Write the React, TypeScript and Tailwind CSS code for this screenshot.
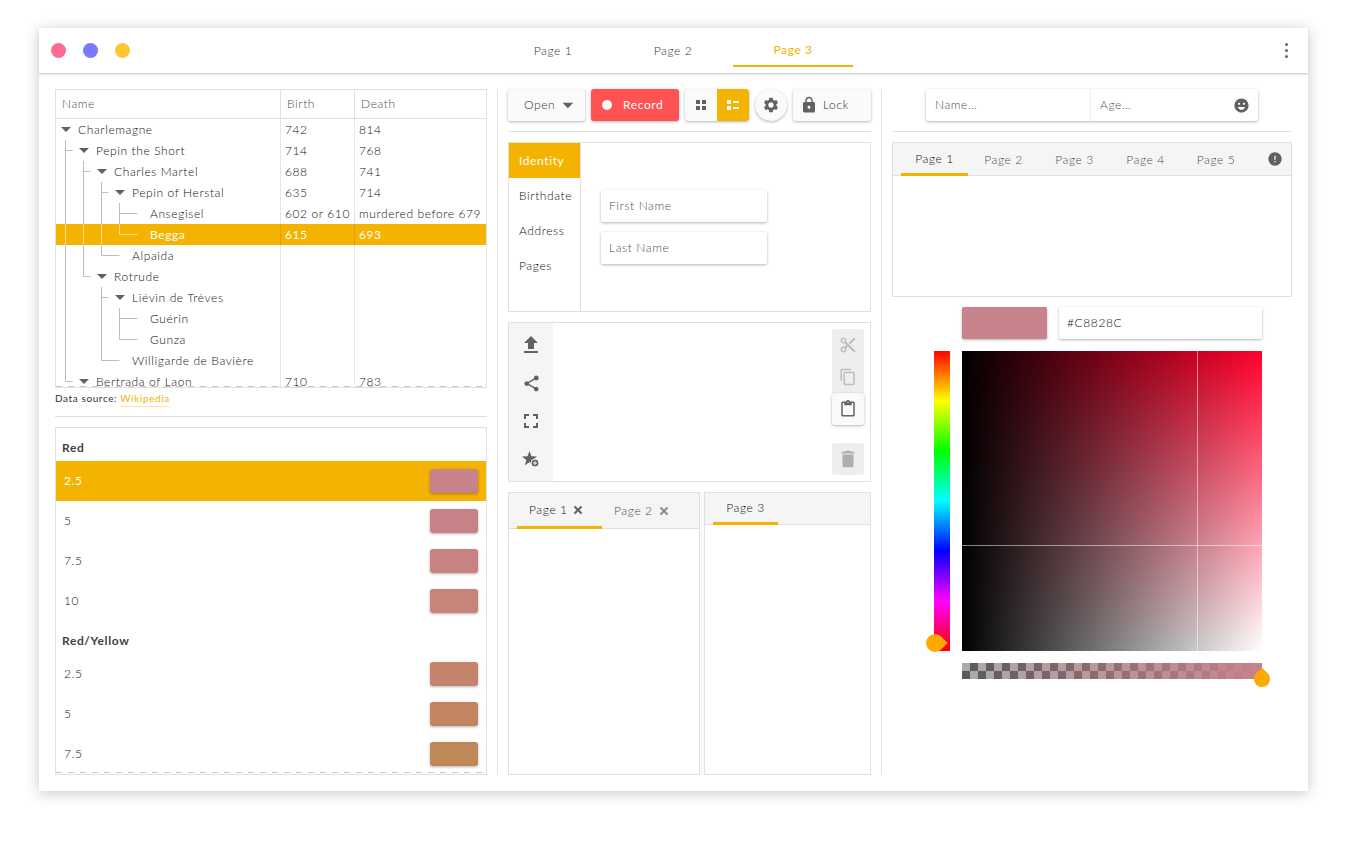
import React from 'react'
import {
  MdArrowDropDown,
  MdContentCopy,
  MdContentCut,
  MdContentPaste,
  MdDelete,
  MdEmojiEmotions,
  MdError,
  MdFileUpload,
  MdFullscreen,
  MdLock,
  MdSettings,
  MdShare,
} from 'react-icons/md'

type TreeRowData = {
  name: string
  birth?: string
  death?: string
  depth: number
  // guide columns that run the full row height
  pass: number[]
  kind: 'tee' | 'elbow' | 'none'
  branch: boolean
  selected?: boolean
}

const treeRows: TreeRowData[] = [
  { name: 'Charlemagne', birth: '742', death: '814', depth: 0, pass: [], kind: 'none', branch: true },
  { name: 'Pepin the Short', birth: '714', death: '768', depth: 1, pass: [], kind: 'tee', branch: true },
  { name: 'Charles Martel', birth: '688', death: '741', depth: 2, pass: [0], kind: 'tee', branch: true },
  { name: 'Pepin of Herstal', birth: '635', death: '714', depth: 3, pass: [0, 1], kind: 'tee', branch: true },
  { name: 'Ansegisel', birth: '602 or 610', death: 'murdered before 679', depth: 4, pass: [0, 1, 2], kind: 'tee', branch: false },
  { name: 'Begga', birth: '615', death: '693', depth: 4, pass: [0, 1, 2], kind: 'elbow', branch: false, selected: true },
  { name: 'Alpaida', depth: 3, pass: [0, 1], kind: 'elbow', branch: false },
  { name: 'Rotrude', depth: 2, pass: [0], kind: 'elbow', branch: true },
  { name: 'Liévin de Trèves', depth: 3, pass: [0], kind: 'tee', branch: true },
  { name: 'Guérin', depth: 4, pass: [0, 2], kind: 'tee', branch: false },
  { name: 'Gunza', depth: 4, pass: [0, 2], kind: 'elbow', branch: false },
  { name: 'Willigarde de Bavière', depth: 3, pass: [0], kind: 'elbow', branch: false },
  { name: 'Bertrada of Laon', birth: '710', death: '783', depth: 1, pass: [], kind: 'elbow', branch: true },
]

const colorGroups = [
  {
    title: 'Red',
    items: [
      { label: '2.5', color: 'bg-[#c8828c]', selected: true },
      { label: '5', color: 'bg-[#c88186]' },
      { label: '7.5', color: 'bg-[#c88281]' },
      { label: '10', color: 'bg-[#c7847a]' },
    ],
  },
  {
    title: 'Red/Yellow',
    items: [
      { label: '2.5', color: 'bg-[#c5836c]' },
      { label: '5', color: 'bg-[#c28562]' },
      { label: '7.5', color: 'bg-[#bf8859]' },
    ],
  },
]

const raised = 'shadow-[0_1px_3px_rgba(0,0,0,0.3)]'
const dashes =
  'bg-[repeating-linear-gradient(to_right,#c8c8c8_0,#c8c8c8_6px,transparent_6px,transparent_12px)]'

function TreeGuide({ row }: { row: TreeRowData }) {
  const x = (i: number) => 9.5 + i * 18
  const line = row.selected ? 'rgba(255,255,255,0.55)' : '#bdbdbd'
  const last = row.depth - 1
  return (
    <svg width={22 + row.depth * 18} height={21} className="shrink-0">
      {row.pass.map(i => (
        <line key={i} x1={x(i)} x2={x(i)} y1={0} y2={21} stroke={line} />
      ))}
      {row.kind !== 'none' && (
        <>
          <line x1={x(last)} x2={x(last)} y1={0} y2={row.kind === 'tee' ? 21 : 10.5} stroke={line} />
          <line x1={x(last)} x2={x(last) + (row.branch ? 7 : 18)} y1={10.5} y2={10.5} stroke={line} />
        </>
      )}
      {row.branch && (
        <polygon points={`${5 + row.depth * 18},8 ${15 + row.depth * 18},8 ${10 + row.depth * 18},13`} fill="#616161" />
      )}
    </svg>
  )
}

function TreeTable() {
  return (
    <div className="relative h-[299px] shrink-0 overflow-hidden border border-[#e0e0e0]">
      <div className="flex h-[29px] items-center border-b border-[#e0e0e0] text-[#4f4f4f]">
        <div className="w-[224px] pl-[6px]">Name</div>
        <div className="flex h-full w-[74px] items-center border-l border-[#e0e0e0] pl-[6px]">Birth</div>
        <div className="flex h-full flex-1 items-center border-l border-[#e0e0e0] pl-[6px]">Death</div>
      </div>
      {treeRows.map(row => (
        <div
          key={row.name}
          className={`flex h-[21px] items-center ${row.selected ? 'bg-[#f4b300] font-normal text-white' : 'text-[#111111]'}`}
        >
          <div className="flex h-full w-[224px] items-center whitespace-nowrap">
            <TreeGuide row={row} />
            {row.name}
          </div>
          <div className="flex h-full w-[74px] items-center whitespace-nowrap border-l border-black/10 pl-[4px]">
            {row.birth}
          </div>
          <div className="flex h-full flex-1 items-center whitespace-nowrap border-l border-black/10 pl-[4px]">
            {row.death}
          </div>
        </div>
      ))}
      <div className={`absolute inset-x-0 bottom-0 h-[1px] ${dashes}`} />
    </div>
  )
}

function ColorList() {
  return (
    <div className="relative min-h-0 flex-1 overflow-hidden border border-[#e0e0e0]">
      {colorGroups.map(group => (
        <div key={group.title}>
          <div className="flex h-[33px] items-center pl-[6px] pt-[6px] font-bold text-[#424242]">{group.title}</div>
          {group.items.map(item => (
            <div
              key={item.label}
              className={`flex h-[40px] items-center justify-between px-[8px] ${
                item.selected ? 'bg-[#f4b300] font-normal text-white' : 'text-[#111111]'
              }`}
            >
              {item.label}
              <div className={`h-[24px] w-[48px] rounded-[3px] ${item.color} ${raised}`} />
            </div>
          ))}
        </div>
      ))}
      <div className={`absolute inset-x-0 bottom-[1px] h-[1px] ${dashes}`} />
    </div>
  )
}

function Toolbar() {
  return (
    <div className="flex h-[32px] shrink-0 items-center gap-[6px]">
      <div className={`flex h-full w-[77px] items-center justify-between rounded-[3px] bg-[#fafafa] pl-[16px] pr-[4px] text-[#333333] ${raised}`}>
        Open
        <MdArrowDropDown className="text-[26px] text-[#616161]" />
      </div>
      <div className={`flex h-full w-[88px] items-center gap-[11px] rounded-[3px] bg-[#ff5252] pl-[11px] font-normal text-white ${raised}`}>
        <span className="h-[10px] w-[10px] rounded-full bg-white" />
        Record
      </div>
      <div className={`flex h-full w-[64px] overflow-hidden rounded-[3px] bg-[#fafafa] ${raised}`}>
        <div className="flex w-[32px] items-center justify-center">
          <svg width="10" height="10" viewBox="0 0 10 10" fill="#616161">
            <rect width="4" height="4" />
            <rect x="6" width="4" height="4" />
            <rect y="6" width="4" height="4" />
            <rect x="6" y="6" width="4" height="4" />
          </svg>
        </div>
        <div className="flex w-[32px] items-center justify-center bg-[#f4b300]">
          <svg width="12" height="10" viewBox="0 0 12 10" fill="#fff">
            <rect width="4" height="4" />
            <rect x="6" y="1" width="6" height="2" />
            <rect y="6" width="4" height="4" />
            <rect x="6" y="7" width="6" height="2" />
          </svg>
        </div>
      </div>
      <div className={`flex h-[32px] w-[32px] items-center justify-center rounded-full bg-[#fafafa] ${raised}`}>
        <MdSettings className="text-[18px] text-[#616161]" />
      </div>
      <div className={`flex h-full w-[78px] items-center gap-[5px] rounded-[3px] bg-[#fafafa] pl-[7px] text-[#333333] ${raised}`}>
        <MdLock className="text-[18px] text-[#616161]" />
        Lock
      </div>
    </div>
  )
}

function VerticalTabs() {
  return (
    <div className="flex h-[170px] shrink-0 border border-[#e0e0e0]">
      <div className="w-[72px] border-r border-[#e0e0e0] text-[#111111]">
        {['Identity', 'Birthdate', 'Address', 'Pages'].map((label, i) => (
          <div key={label} className={`flex h-[35px] items-center pl-[10px] ${i === 0 ? 'bg-[#f4b300] font-normal text-white' : ''}`}>
            {label}
          </div>
        ))}
      </div>
      <div className="flex flex-col justify-center gap-[10px] pb-[1px] pl-[20px]">
        {['First Name', 'Last Name'].map(label => (
          <div key={label} className={`flex h-[32px] w-[166px] items-center rounded-[2px] bg-white pl-[8px] text-[#4f4f4f] ${raised}`}>
            {label}
          </div>
        ))}
      </div>
    </div>
  )
}

function StarAdd() {
  return (
    <svg width="18" height="18" viewBox="0 0 18 18">
      <path d="M7.5 1l2 5.2 5.5.3-4.3 3.5 1.5 5.3-4.7-3-4.7 3 1.5-5.3L0 6.5l5.5-.3z" fill="#616161" />
      <circle cx="13" cy="13" r="4" fill="#616161" stroke="#f5f5f5" />
      <path d="M13 11v4M11 13h4" stroke="#f5f5f5" />
    </svg>
  )
}

function CloseMark({ color }: { color: string }) {
  return (
    <svg width="10" height="10" viewBox="0 0 10 10" className="shrink-0">
      <path d="M1.5 1.5l7 7M8.5 1.5l-7 7" stroke={color} strokeWidth="2" />
    </svg>
  )
}

function ToolPanel() {
  const sideIcons = [
    <MdFileUpload key="upload" className="text-[24px]" />,
    <MdShare key="share" className="text-[19px]" />,
    <MdFullscreen key="full" className="text-[24px]" />,
    <StarAdd key="star" />,
  ]
  return (
    <div className="flex h-[160px] shrink-0 border border-[#e0e0e0]">
      <div className="flex w-[44px] flex-col items-center bg-[#f5f5f5] pt-[3px] text-[#616161]">
        {sideIcons.map(icon => (
          <div key={icon.key} className="flex h-[38px] items-center justify-center">
            {icon}
          </div>
        ))}
      </div>
      <div className="flex flex-1 flex-col items-end gap-[18px] pr-[6px] pt-[6px]">
        <div className="w-[32px] rounded-[3px] bg-[#eeeeee]">
          <div className="flex h-[32px] items-center justify-center text-[#bdbdbd]">
            <MdContentCut className="text-[18px]" />
          </div>
          <div className="flex h-[32px] items-center justify-center text-[#bdbdbd]">
            <MdContentCopy className="text-[18px]" />
          </div>
          <div className={`flex h-[32px] items-center justify-center rounded-[3px] bg-[#fafafa] text-[#616161] ${raised}`}>
            <MdContentPaste className="text-[18px]" />
          </div>
        </div>
        <div className="flex h-[32px] w-[32px] items-center justify-center rounded-[3px] bg-[#eeeeee] text-[#aeaeae]">
          <MdDelete className="text-[22px]" />
        </div>
      </div>
    </div>
  )
}

function SplitTabs() {
  return (
    <div className="flex min-h-0 flex-1">
      <div className="flex w-[192px] flex-col border border-[#e0e0e0]">
        <div className="flex h-[36px] shrink-0 border-b border-[#e0e0e0] bg-[#f5f5f5] pl-[8px]">
          <div className="flex h-[36px] w-[85px] items-center gap-[5px] border-b-[3px] border-[#f4b300] pl-[12px] text-[#111111]">
            Page 1
            <CloseMark color="#616161" />
          </div>
          <div className="flex h-full items-center gap-[6px] pl-[12px] text-[#4f4f4f]">
            Page 2
            <CloseMark color="#8a8a8a" />
          </div>
        </div>
      </div>
      <div className="w-[4px] shrink-0 bg-[#fafafa]" />
      <div className="flex flex-1 flex-col border border-[#e0e0e0]">
        <div className="flex h-[32px] shrink-0 border-b border-[#e0e0e0] bg-[#f5f5f5] pl-[8px]">
          <div className="flex h-[32px] w-[65px] items-center justify-center border-b-[3px] border-[#f4b300] text-[#111111]">
            Page 3
          </div>
        </div>
      </div>
    </div>
  )
}

function PagesPanel() {
  return (
    <div className="h-[155px] shrink-0 border border-[#e0e0e0]">
      <div className="flex h-[33px] items-center border-b border-[#e0e0e0] bg-[#f5f5f5] pl-[8px] text-[#4f4f4f]">
        <div className="flex h-[33px] w-[67px] items-center justify-center border-b-[3px] border-[#f4b300] pt-[2px] text-[#111111]">Page 1</div>
        <div className="flex w-[71px] justify-center pt-[1px]">Page 2</div>
        <div className="flex w-[71px] justify-center pt-[1px]">Page 3</div>
        <div className="flex w-[71px] justify-center pt-[1px]">Page 4</div>
        <div className="flex w-[70px] justify-center pt-[1px]">Page 5</div>
        <MdError className="ml-auto mr-[8px] text-[16px] text-[#616161]" />
      </div>
    </div>
  )
}

function ColorPicker() {
  return (
    <div className="flex flex-col items-start pl-[42px]">
      <div className="ml-[28px] flex gap-[12px]">
        <div className={`h-[32px] w-[85px] rounded-[2px] bg-[#c8828c] ${raised}`} />
        <div className={`flex h-[32px] w-[203px] items-center rounded-[2px] bg-white pl-[8px] text-[#111111] ${raised}`}>#C8828C</div>
      </div>
      <div className="mt-[12px] flex gap-[12px]">
        <div className="relative h-[300px] w-[16px] bg-[linear-gradient(to_bottom,#f00,#ff0,#0f0,#0ff,#00f,#f0f,#f00)]">
          <div className="absolute left-[-8px] top-[283px] h-[18px] w-[18px] rotate-45 rounded-full rounded-tr-none bg-[#ffa900]" />
        </div>
        <div className="relative h-[300px] w-[300px] bg-[linear-gradient(to_right,#000,transparent),linear-gradient(to_bottom,#ff002b,#fff)]">
          <div className="absolute inset-y-0 left-[235px] w-[1px] bg-white/50" />
          <div className="absolute inset-x-0 top-[194px] h-[1px] bg-white/50" />
        </div>
      </div>
      <div className="relative ml-[28px] mt-[12px] h-[16px] w-[300px] bg-[linear-gradient(to_right,transparent,#c8828c),repeating-conic-gradient(#5a5a5a_0_25%,#aaaaaa_0_50%)] bg-[length:100%_100%,16px_16px]">
        <div className="absolute right-[-8px] top-[8px] h-[16px] w-[16px] -rotate-45 rounded-full rounded-tr-none bg-[#ffa900]" />
      </div>
    </div>
  )
}

export default function App() {
  return (
    <div className="h-[844px] bg-white pl-[39px] pt-[28px] font-[family-name:Lato,sans-serif] text-[12px] font-light tracking-[0.05em]">
      <div className="flex h-[763px] w-[1269px] flex-col bg-white shadow-[0_2px_14px_rgba(0,0,0,0.22)]">
        {/* Title bar */}
        <div className="flex h-[46px] shrink-0 items-center border-b border-[#d0d0d0] pl-[12px] pr-[20px] shadow-[0_1px_2px_rgba(0,0,0,0.1)]">
          <div className="flex w-[442px] gap-[17px]">
            <span className="h-[15px] w-[15px] rounded-full bg-[#ff6b93]" />
            <span className="h-[15px] w-[15px] rounded-full bg-[#7a78ff]" />
            <span className="h-[15px] w-[15px] rounded-full bg-[#ffc535]" />
          </div>
          <div className="flex h-full text-[#333333]">
            <div className="flex w-[120px] items-center justify-center pt-[1px]">Page 1</div>
            <div className="flex w-[120px] items-center justify-center pt-[1px]">Page 2</div>
            <div className="flex h-[39px] w-[120px] items-center justify-center border-b-2 border-[#f4b300] pt-[7px] font-normal text-[#f4b300]">Page 3</div>
          </div>
          <div className="ml-auto flex flex-col gap-[2.5px]">
            <span className="h-[3.5px] w-[3.5px] rounded-full bg-[#666]" />
            <span className="h-[3.5px] w-[3.5px] rounded-full bg-[#666]" />
            <span className="h-[3.5px] w-[3.5px] rounded-full bg-[#666]" />
          </div>
        </div>

        <div className="flex min-h-0 flex-1 px-[16px] pb-[16px] pt-[15px]">
          {/* Left column */}
          <div className="flex w-[432px] shrink-0 flex-col">
            <TreeTable />
            <div className="flex h-[29px] shrink-0 items-center border-b border-[#e0e0e0] pb-[7px] text-[10px] font-normal text-[#333333]">
              Data source:&nbsp;
              <span className="border-b border-[#fbe3a0] text-[#f4b300]">Wikipedia</span>
            </div>
            <div className="h-[10px] shrink-0" />
            <ColorList />
          </div>
          <div className="mx-[10px] w-[1px] shrink-0 bg-[#e0e0e0]" />

          {/* Middle column */}
          <div className="flex w-[363px] shrink-0 flex-col">
            <Toolbar />
            <div className="my-[10px] h-[1px] shrink-0 bg-[#e0e0e0]" />
            <VerticalTabs />
            <div className="h-[10px] shrink-0" />
            <ToolPanel />
            <div className="h-[10px] shrink-0" />
            <SplitTabs />
          </div>
          <div className="mx-[10px] w-[1px] shrink-0 bg-[#e0e0e0]" />

          {/* Right column */}
          <div className="flex min-w-0 flex-1 flex-col">
            <div className={`mx-auto flex h-[32px] w-[332px] shrink-0 rounded-[2px] bg-white text-[#4f4f4f] ${raised}`}>
              <div className="flex w-[165px] items-center border-r border-[#eeeeee] pl-[9px]">Name…</div>
              <div className="flex flex-1 items-center justify-between pl-[9px] pr-[8px]">
                Age…
                <MdEmojiEmotions className="text-[17px] text-[#616161]" />
              </div>
            </div>
            <div className="my-[10px] h-[1px] shrink-0 bg-[#e0e0e0]" />
            <PagesPanel />
            <div className="h-[10px] shrink-0" />
            <ColorPicker />
          </div>
        </div>
      </div>
    </div>
  )
}
